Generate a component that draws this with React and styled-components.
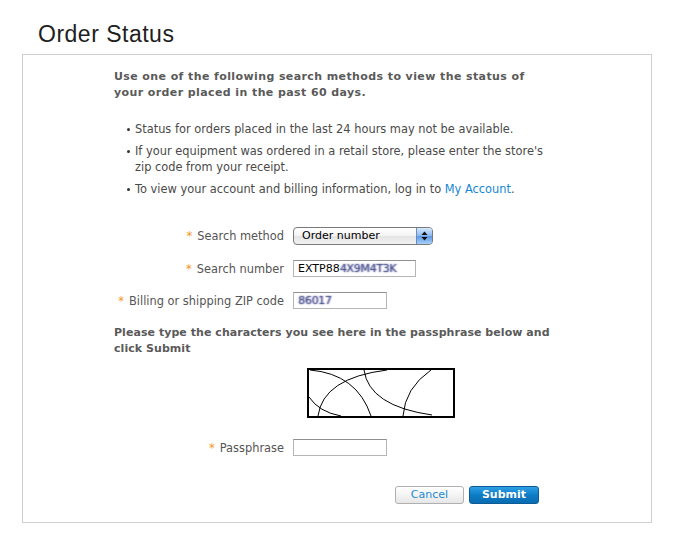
import React from "react";
import styled, { createGlobalStyle } from "styled-components";

const Global = createGlobalStyle`
  html, body { margin: 0; padding: 0; background: #fff; }
  body { font-family: "DejaVu Sans", Verdana, sans-serif; }
`;

const Page = styled.div`
  width: 687px;
  padding-top: 20px;
`;

const Title = styled.h1`
  margin: 0 0 6px 38px;
  font-family: "Liberation Sans", Arial, sans-serif;
  font-weight: normal;
  font-size: 23px;
  letter-spacing: 0.5px;
  line-height: 28px;
  color: #1e1e1e;
`;

const Panel = styled.section`
  margin-left: 22px;
  border: 1px solid #cfcfcf;
  padding: 14px 0 18px 91px;
  box-sizing: border-box;
  width: 630px;
`;

const Intro = styled.p`
  margin: 0;
  width: 440px;
  font-size: 11px;
  letter-spacing: ${(p) => p.$ls ?? 0.4}px;
  line-height: 16px;
  font-weight: bold;
  color: #5a5a5a;
`;

const List = styled.ul`
  margin: 20px 0 0;
  padding: 0 0 0 21px;
  width: 425px;
  list-style: none;
`;

const Item = styled.li`
  position: relative;
  font-size: 11.4px;
  line-height: 16px;
  color: #4a4a4a;
  margin-bottom: 6px;
  &::before {
    content: "";
    position: absolute;
    left: -8px;
    top: 7px;
    width: 3px;
    height: 3px;
    border-radius: 50%;
    background: #333;
  }
`;

const Link = styled.a`
  color: #1587d3;
  text-decoration: none;
`;

const Form = styled.div`
  display: grid;
  grid-template-columns: 170px auto;
  column-gap: 9px;
  row-gap: 15px;
  align-items: center;
  margin-top: ${(p) => p.$top}px;
`;

const Label = styled.label`
  font-size: 11.4px;
  color: #555;
  text-align: right;
  white-space: nowrap;
  line-height: 16px;
`;

const Star = styled.span`
  color: #f7941d;
  margin-right: 5px;
`;

const Field = styled.div`
  display: flex;
  align-items: center;
`;

const Select = styled.div`
  position: relative;
  width: 140px;
  height: 18px;
  box-sizing: border-box;
  border: 1px solid #7a7a7a;
  border-radius: 4px;
  background: linear-gradient(#ffffff, #f3f3f3 50%, #e4e4e4 51%, #f2f2f2);
  font-size: 11px;
  line-height: 16px;
  color: #000;
  padding-left: 8px;
  overflow: hidden;
`;

const Arrows = styled.span`
  position: absolute;
  right: 0;
  top: 0;
  bottom: 0;
  width: 15px;
  border-left: 1px solid #6a8cc0;
  background: linear-gradient(#d6e8fc, #8ab8f0 50%, #5c97e6 51%, #a9d0f8);
  display: flex;
  align-items: center;
  justify-content: center;
`;

const Input = styled.div`
  width: ${(p) => p.$w}px;
  height: 17px;
  box-sizing: border-box;
  border: 1px solid #b5b5b5;
  border-top-color: #8f8f8f;
  background: #fff;
  font-size: 11px;
  line-height: 15px;
  padding-left: 4px;
  color: #000;
  white-space: nowrap;
  overflow: hidden;
  display: flex;
  align-items: center;
`;

const Blur = styled.span`
  color: rgba(60, 75, 130, 0.25);
  text-shadow: 0 0 1.5px #3b4c86, 1px 0 1px rgba(160, 120, 200, 0.6);
  letter-spacing: -0.3px;
`;

const Prompt = styled(Intro)`
  margin-top: 16px;
  width: 460px;
`;

const Captcha = styled.div`
  margin: 11px 0 0 193px;
  width: 148px;
  height: 50px;
  box-sizing: border-box;
  border: 2px solid #000;
  background: #fff;
  svg { display: block; }
`;

const Buttons = styled.div`
  display: flex;
  gap: 5px;
  margin: 30px 0 0 281px;
`;

const Button = styled.button`
  width: ${(p) => p.$w}px;
  height: 18px;
  box-sizing: border-box;
  border-radius: 3px;
  font-family: "DejaVu Sans", Verdana, sans-serif;
  font-size: 11px;
  line-height: 14px;
  padding: 0;
  cursor: pointer;
  border: 1px solid ${(p) => (p.$primary ? "#0b5c96" : "#b0b0b0")};
  color: ${(p) => (p.$primary ? "#fff" : "#1a8ad0")};
  font-weight: ${(p) => (p.$primary ? "bold" : "normal")};
  background: ${(p) =>
    p.$primary
      ? "linear-gradient(#2ea0e6, #0d7cc4 50%, #0a6cb2)"
      : "linear-gradient(#ffffff, #f4f4f4 50%, #e6e6e6)"};
`;

export default function App() {
  return (
    <Page>
      <Global />
      <Title>Order Status</Title>
      <Panel>
        <Intro>
          Use one of the following search methods to view the status of your
          order placed in the past 60 days.
        </Intro>
        <List>
          <Item>Status for orders placed in the last 24 hours may not be available.</Item>
          <Item>
            If your equipment was ordered in a retail store, please enter the
            store's zip code from your receipt.
          </Item>
          <Item>
            To view your account and billing information, log in to{" "}
            <Link href="#">My Account</Link>.
          </Item>
        </List>
        <Form $top={30}>
          <Label>
            <Star>*</Star>Search method
          </Label>
          <Field>
            <Select>
              Order number
              <Arrows>
                <svg width="7" height="10" viewBox="0 0 7 10">
                  <path d="M3.5 0.5 L6.5 4 H0.5 Z" fill="#111" />
                  <path d="M3.5 9.5 L6.5 6 H0.5 Z" fill="#111" />
                </svg>
              </Arrows>
            </Select>
          </Field>
          <Label>
            <Star>*</Star>Search number
          </Label>
          <Field>
            <Input $w={123}>
              EXTP88<Blur>4X9M4T3K</Blur>
            </Input>
          </Field>
          <Label>
            <Star>*</Star>Billing or shipping ZIP code
          </Label>
          <Field>
            <Input $w={94}>
              <Blur>86017</Blur>
            </Input>
          </Field>
        </Form>
        <Prompt $ls={0.05}>
          Please type the characters you see here in the passphrase below and
          click Submit
        </Prompt>
        <Captcha>
          <svg width="144" height="46" viewBox="0 0 144 46" fill="none" stroke="#000" strokeWidth="1">
            <path d="M1 0 Q48 4 62 46" />
            <path d="M0 27 Q10 42 32 46" />
            <path d="M9 46 Q14 8 78 0" />
            <path d="M55 0 Q60 36 123 45" />
            <path d="M122 0 Q96 18 94 46" />
          </svg>
        </Captcha>
        <Form $top={21}>
          <Label>
            <Star>*</Star>Passphrase
          </Label>
          <Field>
            <Input $w={94} />
          </Field>
        </Form>
        <Buttons>
          <Button $w={69}>Cancel</Button>
          <Button $w={70} $primary>
            Submit
          </Button>
        </Buttons>
      </Panel>
    </Page>
  );
}
